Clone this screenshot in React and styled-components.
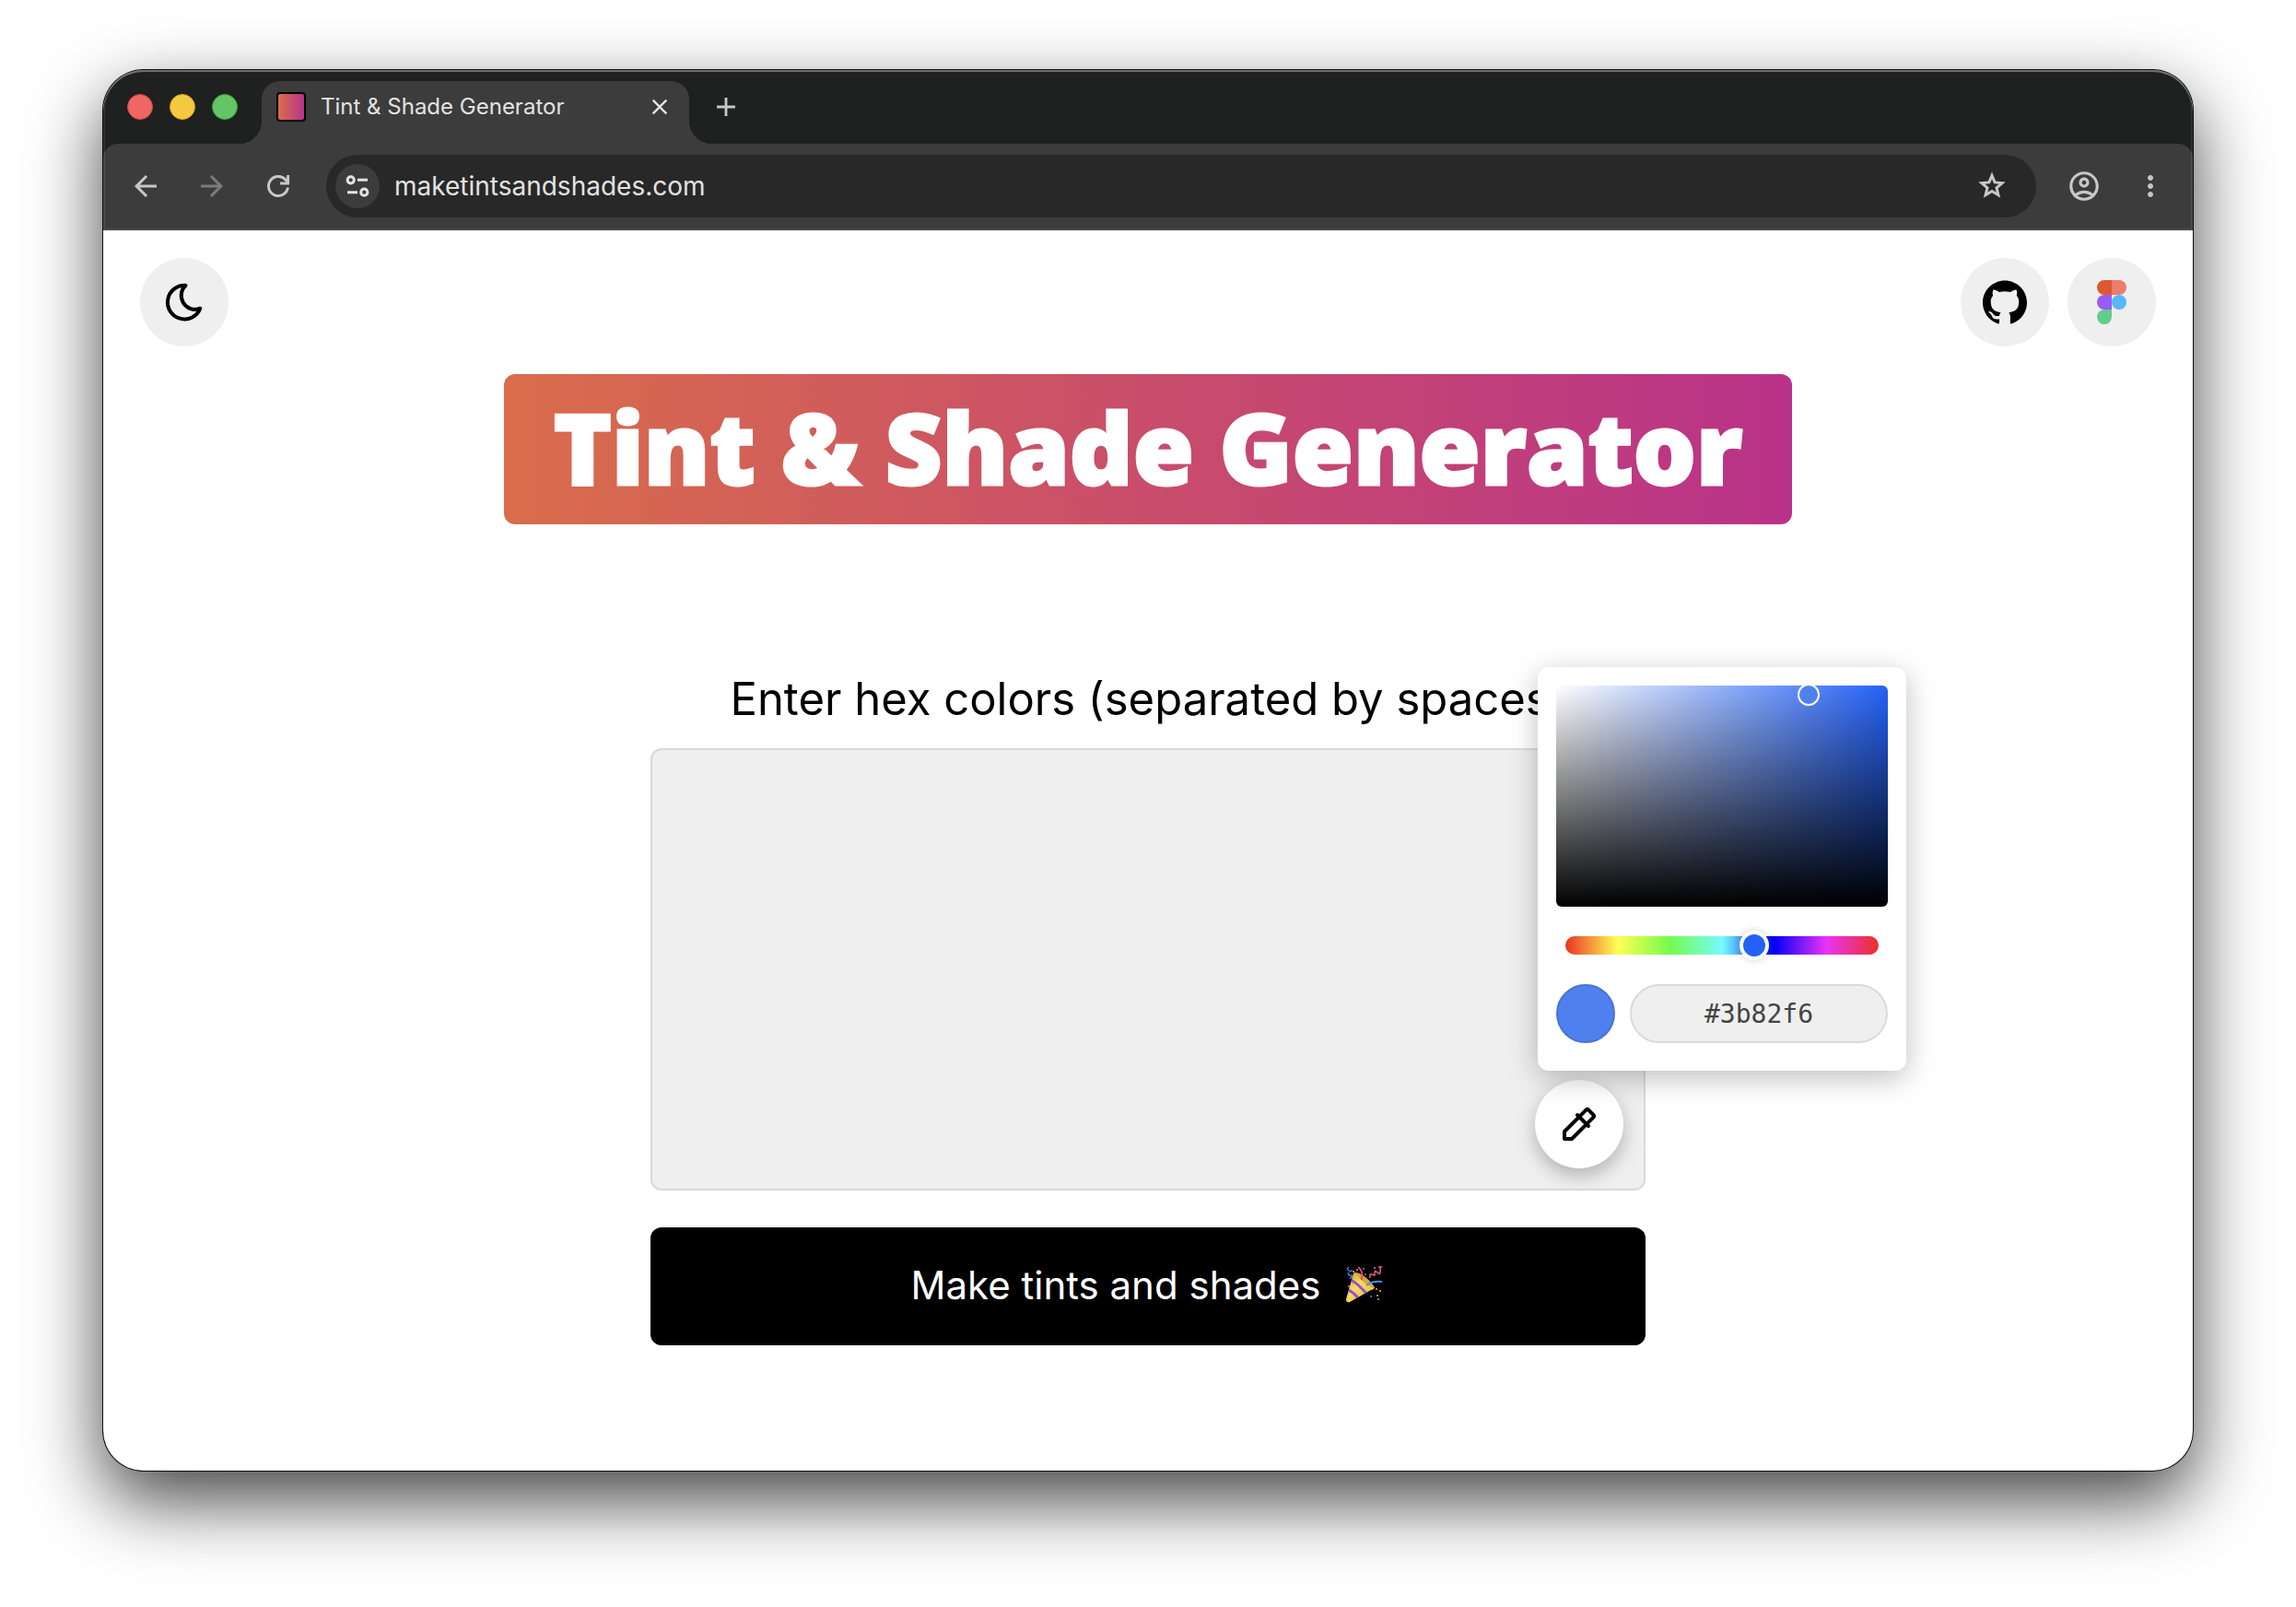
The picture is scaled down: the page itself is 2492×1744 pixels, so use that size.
import { useState } from 'react'
import styled, { createGlobalStyle } from 'styled-components'
import {
  MdAdd,
  MdArrowBack,
  MdArrowForward,
  MdClose,
  MdMoreVert,
  MdOutlineAccountCircle
} from 'react-icons/md'
import { SiGithub } from 'react-icons/si'

const GlobalStyle = createGlobalStyle`
  *,
  *::before,
  *::after {
    box-sizing: border-box;
  }

  body {
    margin: 0;
    background: #fff;
    font-family: Inter, 'Liberation Sans', sans-serif;
  }

  button,
  input,
  textarea {
    margin: 0;
    border: 0;
    font: inherit;
  }

  svg {
    display: block;
    flex: none;
  }
`

const Desktop = styled.div`
  padding: 76px 112px 148px;
`

const Window = styled.div`
  border-radius: 44px;
  background: #fff;
  box-shadow: 0 0 0 1px #0c0d0d, 0 32px 80px rgba(0, 0, 0, 0.74);
`

const Chrome = styled.header`
  position: relative;
  overflow: hidden;
  border-radius: 44px 44px 0 0;
  background: #1f2120;

  /* thin highlight along the window edge */
  &::after {
    content: '';
    position: absolute;
    inset: 0;
    border-radius: inherit;
    box-shadow: inset 0 2px 0 rgba(255, 255, 255, 0.3),
      inset 0 0 0 2px rgba(255, 255, 255, 0.08);
    pointer-events: none;
  }
`

const TabStrip = styled.div`
  display: flex;
  align-items: center;
  height: 80px;
  padding-left: 26px;
`

const Lights = styled.div`
  display: flex;
  gap: 18px;
  margin-right: 26px;
`

const Light = styled.button`
  width: 28px;
  height: 28px;
  padding: 0;
  border: 1px solid ${p => p.$edge};
  border-radius: 50%;
  background: ${p => p.$color};
`

const Tab = styled.div`
  position: relative;
  display: flex;
  align-items: center;
  align-self: flex-end;
  gap: 16px;
  width: 464px;
  height: 68px;
  padding: 0 18px 12px 16px;
  border-radius: 20px 20px 0 0;
  background: #3c3c3c;
  color: #e3e3e3;
  font-size: 24px;
  line-height: 32px;

  &::before,
  &::after {
    content: '';
    position: absolute;
    bottom: 0;
    width: 24px;
    height: 24px;
  }

  &::before {
    right: 100%;
    background: radial-gradient(circle at 0 0, #1f2120 24px, #3c3c3c 24px);
  }

  &::after {
    left: 100%;
    background: radial-gradient(circle at 100% 0, #1f2120 24px, #3c3c3c 24px);
  }
`

const Favicon = styled.span`
  width: 32px;
  height: 32px;
  border: 2px solid #000;
  border-radius: 4px;
  background: linear-gradient(to right, #d96d4b, #b93289);
`

const TabTitle = styled.span`
  flex: 1;
  white-space: nowrap;
`

const ChromeButton = styled.button`
  display: flex;
  align-items: center;
  justify-content: center;
  flex: none;
  width: ${p => (p.$small ? 28 : 48)}px;
  height: ${p => (p.$small ? 28 : 48)}px;
  padding: 0;
  border-radius: 50%;
  background: ${p => (p.$filled ? '#3c3c3c' : 'none')};
  color: ${p => (p.$dim ? '#7c7c7c' : p.$filled ? '#e3e3e3' : '#c7c7c7')};
`

const NewTab = styled(ChromeButton)`
  margin-left: 16px;
`

const Toolbar = styled.div`
  display: flex;
  align-items: center;
  gap: 28px;
  height: 94px;
  padding: 0 22px 2px;
  border-radius: 16px 16px 0 0;
  background: #3c3c3c;
`

const ToolGroup = styled.div`
  display: flex;
  gap: 24px;
`

const AddressBar = styled.div`
  display: flex;
  flex: 1;
  align-items: center;
  gap: 16px;
  height: 68px;
  padding: 0 24px 0 10px;
  border-radius: 34px;
  background: #282828;
`

const Address = styled.input`
  flex: 1;
  min-width: 0;
  padding: 0;
  outline: none;
  background: none;
  color: #e3e3e3;
  font-size: 28px;
  line-height: 40px;
`

const Page = styled.main`
  display: flex;
  flex-direction: column;
  align-items: center;
  padding: 30px 40px 136px;
  color: #000;
`

const TopBar = styled.nav`
  display: flex;
  justify-content: space-between;
  align-self: stretch;
`

const Links = styled.div`
  display: flex;
  gap: 20px;
`

const RoundButton = styled.button`
  display: flex;
  align-items: center;
  justify-content: center;
  width: 96px;
  height: 96px;
  padding: 0;
  border-radius: 50%;
  background: #efefef;
  color: #000;
`

const Title = styled.h1`
  margin: 30px 0 0;
  padding: 0 54px 6px;
  border-radius: 12px;
  background: linear-gradient(to right, #d96d4b, #c94d6b 50%, #b93289);
  color: #fff;
  font-family: 'Open Sans', sans-serif;
  font-weight: 800;
  font-size: 107px;
  line-height: 157px;
  -webkit-text-stroke: 3px #fff;
`

const Form = styled.form`
  width: 100%;
  max-width: 1080px;
  margin-top: 159px;
`

const Label = styled.label`
  display: block;
  margin-bottom: 22px;
  font-size: 49px;
  line-height: 62px;
  text-align: center;
`

const Field = styled.div`
  position: relative;
`

const Colors = styled.textarea`
  display: block;
  width: 100%;
  height: 480px;
  padding: 24px;
  border: 2px solid #dadada;
  border-radius: 12px;
  outline: none;
  resize: none;
  background: #efefef;
  font-size: 49px;
`

const PickerToggle = styled(RoundButton)`
  position: absolute;
  right: 24px;
  bottom: 24px;
  background: #fff;
  box-shadow: 0 8px 20px rgba(0, 0, 0, 0.26);
`

const Picker = styled.div`
  position: absolute;
  right: -283px;
  bottom: 130px;
  display: flex;
  flex-direction: column;
  gap: 32px;
  width: 400px;
  padding: 20px 20px 30px;
  border-radius: 12px;
  background: #fff;
  box-shadow: 0 8px 32px rgba(0, 0, 0, 0.26);
`

const Saturation = styled.div`
  position: relative;
  overflow: hidden;
  height: 240px;
  border-radius: 6px;
  background: linear-gradient(to top, #000, transparent),
    linear-gradient(to right, #fff, transparent), #2461f6;
`

const Marker = styled.span`
  position: absolute;
  width: 24px;
  height: 24px;
  margin: -12px 0 0 -12px;
  border: 2px solid #fff;
  border-radius: 50%;
  background: #4f81ee;
`

const HueTrack = styled.div`
  display: flex;
  justify-content: center;
  align-items: center;
  height: 20px;
  margin: 0 10px;
  border-radius: 10px;
  background: linear-gradient(
    to right,
    #ea3323,
    #ffff54,
    #75fb4c,
    #75fbfd,
    #0000f5,
    #ea33f7,
    #ea3323
  );
`

/* overhangs the track by half a thumb, so the thumb centre reaches both ends */
const Hue = styled.input`
  flex: none;
  width: calc(100% + 32px);
  height: 32px;
  appearance: none;
  outline: none;
  background: none;

  &::-webkit-slider-thumb {
    appearance: none;
    width: 32px;
    height: 32px;
    border: 4px solid #fff;
    border-radius: 50%;
    background: #2461f6;
    box-shadow: 0 0 8px rgba(0, 0, 0, 0.18);
  }
`

const PickerRow = styled.div`
  display: flex;
  gap: 16px;
`

const Swatch = styled.button`
  width: 64px;
  height: 64px;
  padding: 0;
  border: 2px solid #4674d6;
  border-radius: 50%;
  background: #4f81ee;
`

const Hex = styled.input`
  flex: 1;
  min-width: 0;
  height: 64px;
  padding: 0 16px;
  border: 2px solid #dadada;
  border-radius: 32px;
  outline: none;
  background: #efefef;
  color: #444;
  font-family: 'DejaVu Sans Mono', monospace;
  font-size: 28px;
  text-align: center;
`

const Submit = styled.button`
  display: flex;
  align-items: center;
  justify-content: center;
  gap: 26px;
  width: 100%;
  height: 128px;
  margin-top: 40px;
  padding: 0 0 4px;
  border-radius: 12px;
  background: #000;
  color: #fff;
  font-size: 42px;
`

const ReloadIcon = () => (
  <svg width="36" height="36" fill="none" stroke="currentColor" strokeWidth="3">
    <path d="M28.4 19.5A10.5 10.5 0 1 1 25.6 10.8L29 14.6" />
    <path d="M28.6 6v9H20" />
  </svg>
)

const SiteInfoIcon = () => (
  <svg width="28" height="28" fill="none" stroke="currentColor" strokeWidth="3">
    <circle cx="6.7" cy="7.3" r="3.6" />
    <path d="M14 7.3h11M3 20.7h11" />
    <circle cx="21.3" cy="20.7" r="3.6" />
  </svg>
)

const StarIcon = () => (
  <svg width="36" height="36" fill="none" stroke="currentColor" strokeWidth="3">
    <path d="M18 6.5l3.1 7.4 8 .7-6.1 5.2 1.9 7.8-6.9-4.1-6.9 4.1 1.9-7.8-6.1-5.2 8-.7z" />
  </svg>
)

const MoonIcon = () => (
  <svg
    width="48"
    height="48"
    fill="none"
    stroke="currentColor"
    strokeWidth="4"
    strokeLinejoin="round"
  >
    <path d="M25.5 5.8A18.3 18.3 0 1 0 41.3 30.7A15 15 0 0 1 25.5 5.8z" />
  </svg>
)

const FigmaIcon = () => (
  <svg width="32" height="48">
    <path d="M16 0H8a8 8 0 0 0 0 16h8z" fill="#de5833" />
    <path d="M16 0h8a8 8 0 0 1 0 16h-8z" fill="#ec7c6c" />
    <path d="M16 16H8a8 8 0 0 0 0 16h8z" fill="#975cf6" />
    <circle cx="24" cy="24" r="8" fill="#57b7f9" />
    <path d="M16 32H8a8 8 0 1 0 8 8z" fill="#63cd8b" />
  </svg>
)

const PipetteIcon = () => (
  <svg
    width="48"
    height="48"
    viewBox="0 0 24 24"
    fill="none"
    stroke="currentColor"
    strokeWidth="2"
    strokeLinecap="round"
    strokeLinejoin="round"
  >
    <path d="M11 7l6 6" />
    <path d="M4 16L15.7 4.3a1 1 0 0 1 1.4 0l2.6 2.6a1 1 0 0 1 0 1.4L8 20H4z" />
  </svg>
)

const PartyIcon = () => (
  <svg width="44" height="44" viewBox="4 4 44 44" fill="none">
    <defs>
      <linearGradient id="cone" x1="0" y1="0" x2="1" y2="1">
        <stop offset="0" stopColor="#b8871f" />
        <stop offset="0.45" stopColor="#f8dc62" />
        <stop offset="1" stopColor="#d9a52f" />
      </linearGradient>
      <clipPath id="coneClip">
        <path d="M15 13Q25 13 37 29Q36 32 33 32L10 45Q6 46 6 42L14 14z" />
      </clipPath>
    </defs>
    <g clipPath="url(#coneClip)">
      <path d="M0 8h44v40H0z" fill="url(#cone)" />
      <path d="M11 21Q19 25 29 37M8 32Q14 34 20 42" stroke="#9350d8" strokeWidth="3" />
      <path d="M15 13Q27 14 37 30Q27 28 15 13z" fill="#d9a637" />
    </g>
    <path
      d="M9 7q-3 2 0 4t3-1M8 13q1 5 5 3M10 20l3-3"
      stroke="#3f7fe8"
      strokeWidth="1.5"
    />
    <path d="M19 7q6 4 4 14" stroke="#e0455f" strokeWidth="2" />
    <path d="M32 19q-1-5 2-4t3 1 0-3 3 0 3-1 1-5h-3" stroke="#e4688c" strokeWidth="1.5" />
    <path d="M28 27q6-5 17-4" stroke="#4c8bf0" strokeWidth="2" />
    <g fill="#f2c230">
      <circle cx="14" cy="12" r="1" />
      <circle cx="39" cy="31" r="1" />
      <circle cx="43" cy="33" r="1" />
      <circle cx="40" cy="38" r="1" />
    </g>
    <g fill="#4c8bf0">
      <circle cx="25" cy="9" r="1" />
      <circle cx="27" cy="15" r="1" />
      <circle cx="33" cy="39" r="1" />
    </g>
    <g fill="#ee7fa4">
      <circle cx="9" cy="28" r="1" />
      <circle cx="37" cy="8" r="1" />
      <circle cx="41" cy="42" r="1" />
      <circle cx="18" cy="10" r="1" />
    </g>
  </svg>
)

function BrowserChrome() {
  return (
    <Chrome>
      <TabStrip>
        <Lights>
          <Light aria-label="Close window" $color="#ee6763" $edge="#d9403f" />
          <Light aria-label="Minimize window" $color="#f4c842" $edge="#d9a514" />
          <Light aria-label="Zoom window" $color="#64c466" $edge="#35a53b" />
        </Lights>
        <Tab>
          <Favicon />
          <TabTitle>Tint &amp; Shade Generator</TabTitle>
          <ChromeButton $small aria-label="Close tab">
            <MdClose size={28} color="#e3e3e3" />
          </ChromeButton>
        </Tab>
        <NewTab aria-label="New tab">
          <MdAdd size={34} />
        </NewTab>
      </TabStrip>
      <Toolbar>
        <ToolGroup>
          <ChromeButton aria-label="Back">
            <MdArrowBack size={36} />
          </ChromeButton>
          <ChromeButton $dim aria-label="Forward">
            <MdArrowForward size={36} />
          </ChromeButton>
          <ChromeButton aria-label="Reload">
            <ReloadIcon />
          </ChromeButton>
        </ToolGroup>
        <AddressBar>
          <ChromeButton $filled aria-label="Site information">
            <SiteInfoIcon />
          </ChromeButton>
          <Address aria-label="Address" defaultValue="maketintsandshades.com" />
          <ChromeButton aria-label="Bookmark">
            <StarIcon />
          </ChromeButton>
        </AddressBar>
        <ToolGroup>
          <ChromeButton aria-label="Profile">
            <MdOutlineAccountCircle size={38} />
          </ChromeButton>
          <ChromeButton aria-label="Menu">
            <MdMoreVert size={36} />
          </ChromeButton>
        </ToolGroup>
      </Toolbar>
    </Chrome>
  )
}

function ColorPicker({ hex, onHex }) {
  const [hue, setHue] = useState(217)
  const [point] = useState({ x: 0.76, y: 0.04 })

  return (
    <Picker>
      <Saturation>
        <Marker style={{ left: `${point.x * 100}%`, top: `${point.y * 100}%` }} />
      </Saturation>
      <HueTrack>
        <Hue
          type="range"
          min="0"
          max="360"
          aria-label="Hue"
          value={hue}
          onChange={e => setHue(Number(e.target.value))}
        />
      </HueTrack>
      <PickerRow>
        <Swatch type="button" aria-label="Add color" />
        <Hex
          type="text"
          aria-label="Hex color"
          value={hex}
          onChange={e => onHex(e.target.value)}
        />
      </PickerRow>
    </Picker>
  )
}

export default function App() {
  const [open, setOpen] = useState(true)
  const [hex, setHex] = useState('#3b82f6')

  return (
    <Desktop>
      <GlobalStyle />
      <Window>
        <BrowserChrome />
        <Page>
          <TopBar>
            <RoundButton aria-label="Dark mode">
              <MoonIcon />
            </RoundButton>
            <Links>
              <RoundButton as="a" href="#github" aria-label="GitHub">
                <SiGithub size={48} />
              </RoundButton>
              <RoundButton as="a" href="#figma" aria-label="Figma">
                <FigmaIcon />
              </RoundButton>
            </Links>
          </TopBar>
          <Title>Tint &amp; Shade Generator</Title>
          <Form onSubmit={e => e.preventDefault()}>
            <Label htmlFor="colors">Enter hex colors (separated by spaces)</Label>
            <Field>
              <Colors id="colors" spellCheck="false" />
              <PickerToggle
                type="button"
                aria-label="Pick a color"
                onClick={() => setOpen(!open)}
              >
                <PipetteIcon />
              </PickerToggle>
              {open && <ColorPicker hex={hex} onHex={setHex} />}
            </Field>
            <Submit type="submit">
              Make tints and shades
              <PartyIcon />
            </Submit>
          </Form>
        </Page>
      </Window>
    </Desktop>
  )
}
